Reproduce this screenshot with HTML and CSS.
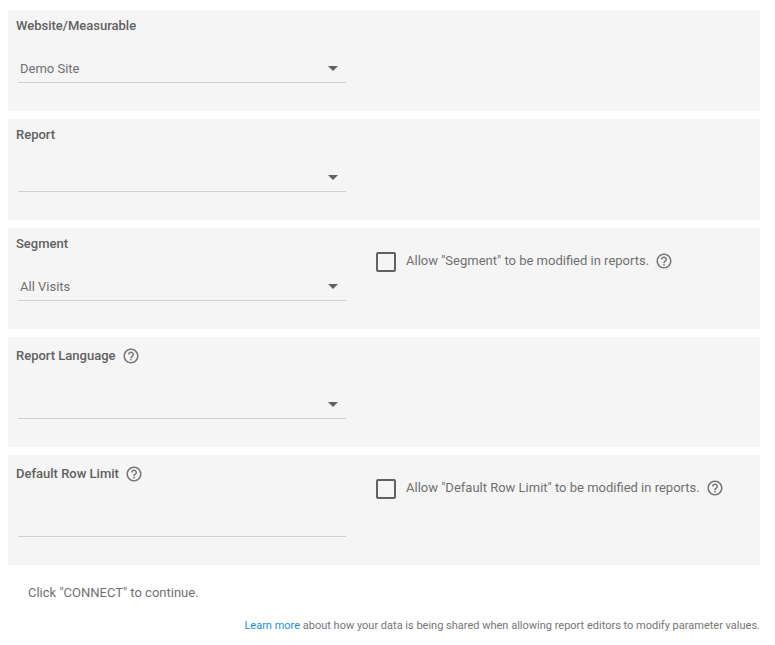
FILE: index.html
```html
<!DOCTYPE html>
<html lang="en">
<head>
  <meta charset="UTF-8">
  <title>Connector Configuration</title>
  <link rel="stylesheet" href="styles.css">
</head>
<body>
  <svg class="icon-defs" width="0" height="0">
    <symbol id="help" viewBox="0 0 24 24">
      <path d="M11 18h2v-2h-2v2zm1-16C6.48 2 2 6.48 2 12s4.48 10 10 10 10-4.48 10-10S17.52 2 12 2zm0 18c-4.41 0-8-3.59-8-8s3.59-8 8-8 8 3.59 8 8-3.59 8-8 8zm0-14c-2.21 0-4 1.79-4 4h2c0-1.1.9-2 2-2s2 .9 2 2c0 2-3 1.75-3 5h2c0-2.25 3-2.5 3-5 0-2.21-1.79-4-4-4z"/>
    </symbol>
  </svg>

  <section class="panel">
    <div class="field">
      <div class="field-label">Website/Measurable</div>
      <div class="select"><span class="select-value">Demo Site</span><span class="arrow"></span></div>
    </div>
  </section>

  <section class="panel">
    <div class="field">
      <div class="field-label">Report</div>
      <div class="select"><span class="select-value"></span><span class="arrow"></span></div>
    </div>
  </section>

  <section class="panel">
    <div class="field">
      <div class="field-label">Segment</div>
      <div class="select"><span class="select-value">All Visits</span><span class="arrow"></span></div>
    </div>
    <div class="allow">
      <span class="checkbox"></span>
      <span class="allow-text">Allow "Segment" to be modified in reports.</span>
      <svg class="help"><use href="#help"/></svg>
    </div>
  </section>

  <section class="panel panel-tall">
    <div class="field">
      <div class="field-label">Report Language <svg class="help"><use href="#help"/></svg></div>
      <div class="select"><span class="select-value"></span><span class="arrow"></span></div>
    </div>
  </section>

  <section class="panel panel-tall">
    <div class="field">
      <div class="field-label">Default Row Limit <svg class="help"><use href="#help"/></svg></div>
      <div class="select"><span class="select-value"></span></div>
    </div>
    <div class="allow">
      <span class="checkbox"></span>
      <span class="allow-text">Allow "Default Row Limit" to be modified in reports.</span>
      <svg class="help"><use href="#help"/></svg>
    </div>
  </section>

  <p class="continue">Click "CONNECT" to continue.</p>
  <p class="learn"><a href="#">Learn more</a> about how your data is being shared when allowing report editors to modify parameter values.</p>
</body>
</html>
```

FILE: styles.css
```css
* {
  box-sizing: border-box;
}

body {
  margin: 0;
  padding: 10px 15px 0 8px;
  background: #fff;
  color: #707070;
  font-family: Roboto, "Liberation Sans", sans-serif;
  font-size: 13px;
}

.icon-defs {
  display: block;
}

.panel {
  display: flex;
  height: 101px;
  margin-bottom: 8px;
  padding: 7px 8px 0;
  background: #f5f5f5;
}

.panel-tall {
  height: 110px;
  padding-top: 10px;
}

.field {
  display: flex;
  flex-direction: column;
  width: 330px;
}

.field-label {
  display: flex;
  align-items: center;
  gap: 6.5px;
  height: 16px;
  color: #616161;
  font-size: 13px;
  font-weight: 500;
}

.select {
  display: flex;
  align-items: center;
  justify-content: space-between;
  height: 33px;
  margin: 17px 0 0 2px;
  padding: 4px 8px 0 2px;
  border-bottom: 1px solid #d0d0d0;
}

.panel-tall .select {
  margin-top: 23px;
}

.arrow {
  width: 0;
  height: 0;
  border-left: 5px solid transparent;
  border-right: 5px solid transparent;
  border-top: 5px solid #616161;
}

.allow {
  display: flex;
  align-items: flex-start;
  height: 20px;
  margin: 17px 0 0 30px;
  line-height: 16px;
}

.panel-tall .allow {
  margin-top: 14px;
}

.checkbox {
  width: 20px;
  height: 20px;
  margin-right: 10px;
  border: 2px solid #616161;
  border-radius: 2px;
}

.allow-text {
  margin: 1px 6px 0 0;
}

.help {
  width: 18px;
  height: 18px;
  fill: #757575;
}

.field-label .help {
  margin-top: 2px;
}

.continue {
  margin: 20px 0 0 20px;
  line-height: 16px;
}

.learn {
  margin: 18px 0 0;
  font-size: 11px;
  line-height: 14px;
  text-align: right;
  color: #757575;
}

.learn a {
  color: #1a8fd8;
  text-decoration: none;
}
```
